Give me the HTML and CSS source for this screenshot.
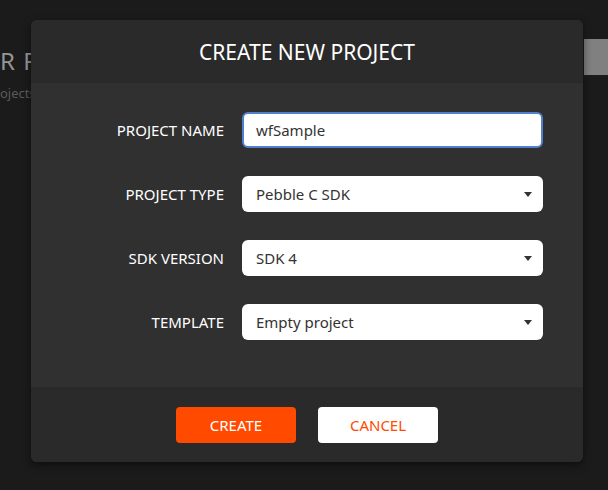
FILE: index.html
```html
<!DOCTYPE html>
<html>
<head>
<meta charset="utf-8">
<link rel="stylesheet" href="styles.css">
</head>
<body>
<div class="page">
  <div class="bg-title">R PROJECTS</div>
  <div class="bg-sub">ojects</div>
  <div class="bg-bar"></div>
</div>
<div class="modal">
  <div class="modal-header">CREATE NEW PROJECT</div>
  <div class="modal-body">
    <div class="row">
      <label class="label">PROJECT NAME</label>
      <div class="field input focused">wfSample</div>
    </div>
    <div class="row">
      <label class="label">PROJECT TYPE</label>
      <div class="field select">Pebble C SDK<span class="caret"></span></div>
    </div>
    <div class="row">
      <label class="label">SDK VERSION</label>
      <div class="field select">SDK 4<span class="caret"></span></div>
    </div>
    <div class="row">
      <label class="label">TEMPLATE</label>
      <div class="field select">Empty project<span class="caret"></span></div>
    </div>
  </div>
  <div class="modal-footer">
    <button class="btn btn-primary">CREATE</button>
    <button class="btn btn-secondary">CANCEL</button>
  </div>
</div>
</body>
</html>
```

FILE: styles.css
```css
html, body {
  margin: 0;
  padding: 0;
  width: 608px;
  height: 490px;
  overflow: hidden;
  background: #1b1b1b;
  font-family: "Noto Sans", "DejaVu Sans", sans-serif;
}
.page {
  position: absolute;
  inset: 0;
}
.bg-title {
  position: absolute;
  left: 0;
  top: 44px;
  font-size: 24px;
  color: #959595;
  letter-spacing: 1px;
  white-space: nowrap;
}
.bg-sub {
  position: absolute;
  left: 0;
  top: 84px;
  font-size: 13px;
  color: #5a5a5a;
}
.bg-bar {
  position: absolute;
  left: 584px;
  top: 39px;
  width: 24px;
  height: 36px;
  background: #808080;
}
.modal {
  position: absolute;
  left: 31px;
  top: 20px;
  width: 552px;
  border-radius: 6px;
  overflow: hidden;
  background: #2a2a2a;
  box-shadow: 0 3px 8px rgba(0,0,0,0.5);
}
.modal-header {
  height: 63px;
  display: flex;
  align-items: center;
  justify-content: center;
  color: #ffffff;
  font-size: 21px;
  background: #2a2a2a;
}
.modal-body {
  background: #303030;
  padding: 29px 40px 47px 0;
  display: flex;
  flex-direction: column;
  gap: 28px;
}
.row {
  display: flex;
  align-items: center;
  height: 36px;
}
.label {
  width: 193px;
  text-align: right;
  color: #ffffff;
  font-size: 15px;
  padding-right: 18px;
  flex-shrink: 0;
}
.field {
  flex: 1;
  height: 36px;
  box-sizing: border-box;
  background: #ffffff;
  border-radius: 6px;
  display: flex;
  align-items: center;
  padding-left: 14px;
  font-size: 15px;
  color: #333333;
  position: relative;
}
.focused {
  border: 2px solid #4f80c9;
  padding-left: 12px;
}
.caret {
  position: absolute;
  right: 11px;
  top: 16px;
  width: 0;
  height: 0;
  border-left: 4px solid transparent;
  border-right: 4px solid transparent;
  border-top: 5px solid #333333;
}
.modal-footer {
  height: 75px;
  display: flex;
  align-items: center;
  justify-content: center;
  gap: 22px;
  background: #2a2a2a;
}
.btn {
  width: 120px;
  height: 36px;
  border: none;
  border-radius: 4px;
  font-family: "Noto Sans", "DejaVu Sans", sans-serif;
  font-size: 15px;
  padding: 0;
}
.btn-primary {
  background: #ff4a00;
  color: #ffffff;
}
.btn-secondary {
  background: #ffffff;
  color: #ff4a00;
}
```
